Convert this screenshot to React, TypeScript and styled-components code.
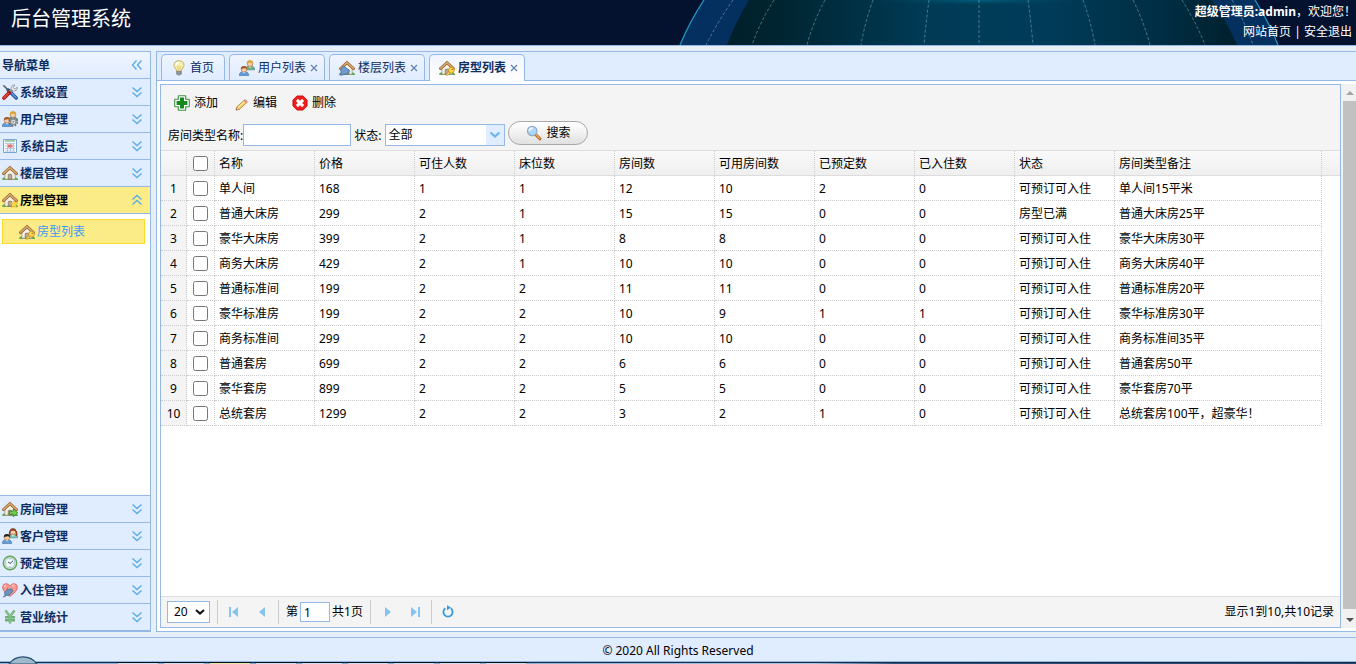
import React from 'react';
import styled, { createGlobalStyle, css } from 'styled-components';

const LINE = '#95b8e7';
const PALE = '#e0ecff';

const GlobalStyle = createGlobalStyle`
  *, *::before, *::after { box-sizing: border-box; }
  html, body, #root { height: 100%; }
  body {
    margin: 0;
    overflow: hidden;
    background: #e6eef8;
    color: #000;
    font: 12px/16px "Noto Sans", "Noto Sans CJK SC", sans-serif;
  }
  button, input, select { font: inherit; color: inherit; }
  button { margin: 0; padding: 0; border: 0; background: none; cursor: pointer; }
  svg { display: block; flex: none; }
`;

/* ---------- page frame ---------- */

const Page = styled.div`
  display: flex;
  flex-direction: column;
  height: 100vh;
`;

const Header = styled.header`
  position: relative;
  display: flex;
  justify-content: space-between;
  height: 46px;
  flex: none;
  overflow: hidden;
  background: #04122f;
  border-bottom: 1px solid ${LINE};
  color: #fff;
`;

const GlobeBackdrop = styled.svg`
  position: absolute;
  inset: 0;
  width: 100%;
  height: 100%;
`;

const Title = styled.h1`
  position: relative;
  margin: 0;
  padding: 4px 0 0 11px;
  font-size: 20px;
  line-height: 30px;
  font-weight: 400;
`;

const Account = styled.div`
  position: relative;
  padding: 2px 4px 0 0;
  text-align: right;
  line-height: 20px;
`;

const Greeting = styled.p`
  margin: 0 -4px 0 0;
`;

const HeaderLink = styled.a`
  color: #fff;
  text-decoration: none;
`;

const Body = styled.div`
  display: flex;
  gap: 5px;
  flex: 1;
  min-height: 0;
  padding: 5px 0;
`;

const Footer = styled.footer`
  height: 25px;
  flex: none;
  background: ${PALE};
  border: solid ${LINE};
  border-width: 1px 0;
  text-align: center;
  line-height: 26px;
`;

const TaskStrip = styled.div`
  position: relative;
  height: 2px;
  flex: none;
  background: linear-gradient(90deg, #8fb9dc, #7ba3c8 20%, #a9c6e2 60%, #31527c 66%, #27456f);
  border-top: 1px solid #142a47;
`;

const StripDrawing = styled.svg`
  position: absolute;
  left: 0;
  bottom: 0;
`;

/* ---------- navigation ---------- */

const Sidebar = styled.nav`
  display: flex;
  flex-direction: column;
  width: 151px;
  flex: none;
  border: solid ${LINE};
  border-width: 1px 1px 1px 0;
  background: #fff;
`;

const SidebarTitle = styled.div`
  display: flex;
  align-items: center;
  height: 27px;
  flex: none;
  padding: 0 5px 0 2px;
  border-bottom: 1px solid ${LINE};
  background: linear-gradient(#eff5ff, ${PALE});
  color: #0e2d5f;
  font-weight: 700;
`;

const NavHeading = styled.button<{ $active?: boolean }>`
  display: flex;
  align-items: center;
  gap: 2px;
  width: 100%;
  height: 27px;
  flex: none;
  padding: 0 5px 0 2px;
  border-bottom: 1px solid ${LINE};
  background: ${p => (p.$active ? '#fbec88' : PALE)};
  color: ${p => (p.$active ? '#000' : '#0e2d5f')};
  font-weight: 700;
  text-align: left;
`;

const NavLabel = styled.span`
  flex: 1;
  padding-top: 2px;
`;

const NavPanel = styled.div`
  flex: 1;
  padding: 5px 5px 0 2px;
  border-bottom: 1px solid ${LINE};
`;

const NavLink = styled.a`
  display: flex;
  align-items: center;
  gap: 2px;
  height: 25px;
  padding-left: 16px;
  border: 1px solid #fbdc2b;
  background: #fbec88;
  color: #3b9cf5;
  text-decoration: none;
`;

/* ---------- tabs ---------- */

const Main = styled.main`
  display: flex;
  flex-direction: column;
  flex: 1;
  min-width: 0;
  border: solid ${LINE};
  border-width: 1px 0 1px 1px;
  background: #fff;
`;

const TabBar = styled.div`
  display: flex;
  gap: 4px;
  height: 29px;
  flex: none;
  padding: 2px 0 0 4px;
  border-bottom: 1px solid ${LINE};
  background: ${PALE};
`;

const Tab = styled.div<{ $active?: boolean }>`
  display: flex;
  align-items: center;
  height: ${p => (p.$active ? 27 : 26)}px;
  padding: ${p => (p.$active ? 0 : 1)}px 6px 0 9px;
  border: 1px solid ${LINE};
  border-bottom: 0;
  border-radius: 5px 5px 0 0;
  color: #0e2d5f;
  background: linear-gradient(#eff5ff, ${PALE});
  ${p => p.$active && css`background: linear-gradient(#eff5ff, #fff); font-weight: 700;`}
`;

const TabButton = styled.button`
  display: flex;
  align-items: center;
  gap: 3px;
  font-weight: inherit;
`;

const HomeTab = styled(Tab)`
  padding: 1px 10px 0 9px;
`;

const TabClose = styled.button`
  margin-left: 4px;
`;

const Workspace = styled.div`
  display: flex;
  flex: 1;
  min-height: 0;
  padding: 3px 0 3px 3px;
`;

const GridPanel = styled.section`
  display: flex;
  flex-direction: column;
  flex: 1;
  min-width: 0;
  border: 1px solid ${LINE};
`;

const ScrollTrack = styled.div`
  display: flex;
  flex-direction: column;
  width: 15px;
  flex: none;
  padding-left: 2px;
  background: #f1f1f1;
`;

const ScrollArrow = styled.button`
  display: flex;
  align-items: center;
  justify-content: center;
  height: 17px;
  flex: none;
`;

const ScrollThumb = styled.div`
  flex: 1;
  margin-bottom: 2px;
  background: #c1c1c1;
`;

/* ---------- toolbar ---------- */

const Toolbar = styled.div`
  flex: none;
  padding: 6px 7px 0;
  background: #f4f4f4;
  border-bottom: 1px solid #ddd;
`;

const ActionRow = styled.div`
  display: flex;
  gap: 15px;
  height: 24px;
  padding-left: 6px;
`;

const Action = styled.button`
  display: flex;
  align-items: center;
  gap: 4px;
`;

const FilterRow = styled.form`
  display: flex;
  align-items: center;
  height: 35px;
  padding-top: 5px;
`;

const FilterLabel = styled.label`
  padding-top: 2px;
`;

const StateLabel = styled(FilterLabel)`
  margin: 0 4px 0 3px;
`;

const TextBox = styled.input`
  width: 108px;
  height: 22px;
  padding: 0 4px;
  border: 1px solid ${LINE};
  background: #fff;
  outline: 0;
`;

const Combo = styled.div`
  display: flex;
  align-items: center;
  width: 120px;
  height: 22px;
  border: 1px solid ${LINE};
  background: linear-gradient(90deg, #fff 100px, ${PALE} 100px);
`;

const ComboSelect = styled.select`
  width: 118px;
  height: 20px;
  margin-right: -15px;
  padding: 0 2px;
  border: 0;
  background: transparent;
  appearance: none;
  outline: 0;
`;

const SearchButton = styled.button`
  display: flex;
  align-items: center;
  justify-content: center;
  gap: 4px;
  width: 80px;
  height: 24px;
  margin: 0 0 4px 3px;
  border: 1px solid #a8a8a8;
  border-radius: 12px;
  background: linear-gradient(#fff, #f4f4f4 40%, #e0e0e0);
`;

/* ---------- data grid ---------- */

const TableArea = styled.div`
  flex: 1;
  min-height: 0;
  background:
    linear-gradient(#ddd, #ddd) 0 24px / 100% 1px no-repeat,
    linear-gradient(#f9f9f9, #efefef) 0 0 / 100% 24px no-repeat;
`;

const Table = styled.table`
  width: calc(100% - 18px);
  table-layout: fixed;
  border-collapse: separate;
  border-spacing: 0;
`;

const cell = css`
  height: 25px;
  padding: 2px 4px 0;
  border: 0 dotted #ccc;
  border-width: 0 1px 1px 0;
  font-weight: 400;
  text-align: left;
  white-space: nowrap;
`;

const HeadCell = styled.th`
  ${cell}
  border-bottom: 1px solid #ddd;
`;

const HeadCheckCell = styled(HeadCell)`
  padding-top: 0;
`;

const Cell = styled.td`
  ${cell}
`;

const CheckCell = styled(Cell)`
  padding-top: 0;
`;

const NumberCell = styled.td`
  ${cell}
  padding: 2px 0 0;
  text-align: center;
  background: #f4f4f4;
`;

const Check = styled.input`
  display: block;
  width: 15px;
  height: 15px;
  margin: 0 2px;
`;

/* ---------- pager ---------- */

const Pager = styled.div`
  display: flex;
  align-items: center;
  height: 31px;
  flex: none;
  padding: 0 6px;
  border-top: 1px solid #ddd;
  background: #f4f4f4;
`;

const PageSize = styled.div`
  display: flex;
  align-items: center;
  width: 43px;
  height: 22px;
  border: 1px solid ${LINE};
  background: #fff;
`;

const PageSizeSelect = styled.select`
  width: 41px;
  height: 20px;
  margin-right: -14px;
  padding: 0 6px;
  border: 0;
  background: transparent;
  appearance: none;
  outline: 0;
`;

const Divider = styled.span`
  width: 1px;
  height: 24px;
  margin: 0 7px;
  background: #ccc;
`;

const PagerButton = styled.button`
  display: flex;
  align-items: center;
  justify-content: center;
  width: 18px;
  height: 24px;
`;

const PagerPair = styled.div`
  display: flex;
  gap: 10px;
`;

const PageBox = styled(TextBox)`
  width: 30px;
  height: 20px;
  margin: 0 2px;
  padding: 0 3px;
`;

const Summary = styled.span`
  margin-left: auto;
`;

/* ---------- icons ---------- */

const Icon = ({ children }: { children: React.ReactNode }) => (
  <svg width="16" height="16" viewBox="0 0 16 16" aria-hidden="true">{children}</svg>
);

const HouseShape = () => (
  <>
    <path d="M0 13.7q2-2.2 5-1.4h7q3-.4 4 1.6v1.2H.5z" fill="#5fae4a" />
    <path d="M2.9 8 8 3.2 13.1 8v6.2H2.9z" fill="#f6f2ea" stroke="#9a8b7a" strokeWidth=".7" />
    <path d="M6.2 14.2V9.7q1.8-1.4 3.6 0v4.5z" fill="#b9a894" stroke="#7a6a5a" strokeWidth=".7" />
    <path d="M1.5 8.6 8 2.7l6.5 5.9" fill="none" stroke="#8f5f2c" strokeWidth="2.9" strokeLinecap="round" />
    <path d="M1.6 8.4 8 2.6l6.4 5.8" fill="none" stroke="#d6a568" strokeWidth="1.7" strokeLinecap="round" />
  </>
);

const HouseIcon = ({ badge }: { badge?: 'star' | 'key' | 'go' | 'link' }) => (
  <Icon>
    <HouseShape />
    {badge === 'star' && <path d="m12 8.4 1.2 2.3 2.6.3-1.9 1.8.5 2.7-2.4-1.3-2.4 1.3.5-2.7L8.2 11l2.6-.3z" fill="#ffd84a" stroke="#e4a91b" strokeWidth=".5" />}
    {badge === 'key' && (
      <>
        <path d="m10.5 11-4 4h2.6l2.6-2.6" fill="#ffe06b" stroke="#b98211" strokeWidth=".7" />
        <circle cx="12.4" cy="10.2" r="2.9" fill="#ffd74f" stroke="#c18c18" strokeWidth=".8" />
        <circle cx="13.2" cy="9.4" r=".7" fill="#9c6c0d" />
      </>
    )}
    {badge === 'go' && <path d="M7.5 10.2h3.8V7.8l4.4 4-4.4 4v-2.5H7.5z" fill="#74cc4e" stroke="#2e7d20" strokeWidth=".8" />}
    {badge === 'link' && <path d="m.8 15 1.4-2.4-.5-3.6 2.8-3 6 4.6-1 2.7-3.5.9-2.8.9z" fill="#6d9bd0" stroke="#44698f" strokeWidth=".8" />}
  </Icon>
);

const ToolsIcon = () => (
  <Icon>
    <path d="m14.2 14-8-8" stroke="#1e4f94" strokeWidth="3.4" strokeLinecap="round" />
    <path d="m14 13.6-4-4" stroke="#5a96dc" strokeWidth="1.6" strokeLinecap="round" />
    <path d="M6.8 6.8 2.3 2.3" stroke="#555" strokeWidth="1.6" />
    <path d="m.8.9 1.6.2 1.7 1.8-1 1-2-1.6z" fill="#777" />
    <path d="M6.6 9.4 11 5" stroke="#8b8f94" strokeWidth="3" />
    <path d="M15.2 3.2 13 5.2l-2-1.8L13 1Q9.8.3 9.4 3.2L9 5l2.1 2.2 2-.4q2.9-.7 2.1-3.6z" fill="#eceef0" stroke="#8b8f94" strokeWidth=".8" />
    <path d="m2 14 5.2-5.2" stroke="#a31212" strokeWidth="3.6" strokeLinecap="round" />
    <path d="m2 13.8 4.5-4.5" stroke="#e5473e" strokeWidth="1.7" strokeLinecap="round" />
  </Icon>
);

const Person = ({ x, y, hair, shirt }: { x: number; y: number; hair: string; shirt: string }) => (
  <g transform={`translate(${x} ${y})`}>
    <path d="M0 9.5Q0 5.6 4.7 5.6t4.7 3.9z" fill={shirt} stroke="#4a719a" strokeWidth=".6" />
    <path d="m3.2 5.9 1.5 1.7 1.5-1.7z" fill="#fff" />
    <circle cx="4.7" cy="3.4" r="2.8" fill="#f4cda5" stroke="#a46a3c" strokeWidth=".6" />
    <path d="M1.6 3.6Q1 .1 4.7 0t3.1 3.7Q6.5 1.9 4.3 2.5 2.6 2.6 1.6 3.6z" fill={hair} />
  </g>
);

const UsersIcon = ({ variant }: { variant?: 'gear' | 'customer' }) => (
  <Icon>
    <Person x={6.3} y={0.3} hair={variant === 'customer' ? '#8b4528' : '#dba434'} shirt={variant === 'customer' ? '#7fd1b4' : '#6fb56a'} />
    <Person x={0.3} y={6} hair={variant === 'customer' ? '#27211e' : '#a95a2b'} shirt="#5d9ce0" />
    {variant === 'customer' && <path d="M8 3Q7 7 8.8 6.8M14 3q1.4 3 0 5" stroke="#8b4528" strokeWidth="1.6" fill="none" />}
    {variant === 'gear' && (
      <>
        <circle cx="11.3" cy="10.8" r="4" fill="none" stroke="#6e7173" strokeWidth="1.8" strokeDasharray="1.8 1.3" />
        <circle cx="11.3" cy="10.8" r="2.8" fill="#e3e5e6" stroke="#898d90" strokeWidth="1.3" />
        <circle cx="11.3" cy="10.8" r="1" fill="#8c8f92" />
      </>
    )}
  </Icon>
);

const LogIcon = () => (
  <Icon>
    <path d="M1.5 1.5h13v13h-13z" fill="#f7faff" stroke="#7da3d0" />
    <path d="M3 3h10" stroke="#6cb370" strokeWidth="1.2" />
    <path d="M3 5.5h10M3 8h10M3 10.5h10M3 13h10M5.5 5v8.5M8.5 5v8.5M11.5 5v8.5" stroke="#a7c3e6" strokeWidth=".9" />
    <path d="M6 6.5h4.5v3H6z" fill="#e87065" />
  </Icon>
);

const ClockIcon = () => (
  <Icon>
    <circle cx="8" cy="8" r="6.7" fill="#e9f3e6" stroke="#5fa557" strokeWidth="1.4" />
    <circle cx="8" cy="8" r="5" fill="#f4f9fc" stroke="#91b6c9" strokeWidth=".8" />
    <path d="M8 8.5 11 5.8M8.3 8.5 6 7" stroke="#34546a" fill="none" />
    <path d="M8 3.6v1M8 11.4v1M3.6 8h1M11.4 8h1" stroke="#7f9cae" strokeWidth=".8" />
  </Icon>
);

const HeartIcon = () => (
  <Icon>
    <path d="M8 14.3Q.4 9 .6 5.2.9 1.7 4 1.7 6.7 1.7 8 4q1.3-2.3 4-2.3 3.1 0 3.4 3.5Q15.6 9 8 14.3z" fill="#f69a94" stroke="#d65555" strokeWidth=".8" />
    <path d="M2.2 5Q2.3 3.2 4 3M10 4q1-1 2.4-.8" stroke="#ffd1cd" strokeWidth="1.2" fill="none" />
    <path d="m1.4 15.2 1.7-2.1-.6-2.6 2.2-2.2 1-2 1.5 1.5 2-1.3 1.7 2.1-1.5 2.5-2.3 2.2-2.7.1z" fill="#6e93ba" stroke="#496b8e" strokeWidth=".8" />
  </Icon>
);

const YenIcon = () => (
  <Icon>
    <path d="m3.5 1.5 4.5 6 4.5-6M3 8.3h10M3 11.3h10M8 7.5v7" stroke="#6fae76" strokeWidth="2.4" fill="none" />
    <path d="m3.5 1.5 4.5 6 4.5-6M8 7.5v7" stroke="#8fc68e" strokeWidth="1.2" fill="none" />
  </Icon>
);

const BulbIcon = () => (
  <Icon>
    <path d="M5.7 11.3Q5.7 9.6 4.2 8 3 6.8 3 5.2 3.2.9 8 .7q4.8.2 5 4.5 0 1.6-1.2 2.8-1.5 1.6-1.5 3.3z" fill="#f8f0ae" stroke="#b9a860" strokeWidth=".9" />
    <path d="M5 5Q5.3 2.7 7.6 2.5" stroke="#fff" strokeWidth="1.5" fill="none" />
    <path d="M7 11V7L6.2 5.8M9 11V7l.8-1.2" stroke="#d9b64c" strokeWidth=".7" fill="none" />
    <path d="M5.7 11.5h4.6v2.7q-2.3 1.9-4.6 0z" fill="#aeb4b8" stroke="#6f767b" strokeWidth=".7" />
    <path d="M5.8 13h4.4" stroke="#666d72" strokeWidth=".8" />
  </Icon>
);

const AddIcon = () => (
  <Icon>
    <path d="M4.7.7h6.6l.4.4v3.2h3.2l.4.4v6.6l-.4.4h-3.2v3.2l-.4.4H4.7l-.4-.4v-3.2H1.1l-.4-.4V4.7l.4-.4h3.2V1.1z" fill="#fff" stroke="#3f8f43" strokeWidth="1.1" />
    <path d="M6 2.6h4V6h3.4v4H10v3.4H6V10H2.6V6H6z" fill="#148a1c" />
  </Icon>
);

const PencilIcon = () => (
  <Icon>
    <g transform="translate(2 2) scale(.86)">
      <path d="m1.3 15 .8-3.5L10.4 4q1.1-1 2.5.3 1.3 1.4.4 2.5L5 14.5z" fill="#f7c75e" stroke="#b87b32" strokeWidth=".9" />
      <path d="m3.8 12.4 7.8-7.6" stroke="#fff0b4" strokeWidth="1.3" />
      <path d="m10.4 4 .9-.8q2.6.3 3 2.8l-1 .9z" fill="#ef9d8e" stroke="#b5706a" strokeWidth=".6" />
      <path d="m1.3 15 .8-3.5 2.9 3z" fill="#f7e4bd" stroke="#b87b32" strokeWidth=".6" />
      <path d="m1 15.3.4-1.6 1.2 1.2z" fill="#333" />
    </g>
  </Icon>
);

const DeleteIcon = () => (
  <Icon>
    <path d="M5 .9h6L15.1 5v6L11 15.1H5L.9 11V5z" fill="#ee1c1c" stroke="#c30d0d" strokeWidth=".8" strokeLinejoin="round" />
    <path d="m4.9 4.9 6.2 6.2M11.1 4.9l-6.2 6.2" stroke="#fff" strokeWidth="3" />
  </Icon>
);

const SearchIcon = () => (
  <Icon>
    <path d="m9.5 9.5 4.4 4.3" stroke="#a65f22" strokeWidth="3" strokeLinecap="round" />
    <path d="m10.3 10 3.5 3.5" stroke="#f4a64c" strokeWidth="1.6" strokeLinecap="round" />
    <circle cx="6.2" cy="6" r="4.7" fill="#aed8f8" stroke="#93a9c4" strokeWidth="1.3" />
    <path d="M3.5 6Q3.6 3.2 6.8 3.2" stroke="#e9f7ff" strokeWidth="1.7" fill="none" />
  </Icon>
);

const DoubleChevron = ({ turn = 0 }: { turn?: number }) => (
  <svg width="16" height="16" viewBox="0 0 16 16" aria-hidden="true">
    <path transform={`rotate(${turn} 8 8)`} d="m3.5 3.5 4.5 4 4.5-4M3.5 8.5l4.5 4 4.5-4" fill="none" stroke="#5cade6" strokeWidth="1.4" />
  </svg>
);

const CloseIcon = () => (
  <svg width="8" height="8" viewBox="0 0 8 8" aria-hidden="true">
    <path d="m1 1 6 6M7 1 1 7" stroke="#6787b5" strokeWidth="1.4" />
  </svg>
);

const pagerPaths = {
  first: 'M3 3h2v10H3zM12 3v10L6 8z',
  prev: 'M11 3v10L5 8z',
  next: 'M6 3v10l6-5z',
  last: 'M11 3h2v10h-2zM4 3v10l6-5z',
};

const PagerGlyph = ({ kind }: { kind: keyof typeof pagerPaths }) => (
  <Icon><path d={pagerPaths[kind]} fill="#86c3ef" /></Icon>
);

const ReloadIcon = () => (
  <Icon>
    <path d="M5.4 4.2a4.6 4.6 0 1 0 5.4.1" fill="none" stroke="#3a9bdc" strokeWidth="1.8" />
    <path d="m7 1.2 4 2.4-4 2.6z" fill="#3a9bdc" />
  </Icon>
);

const meridians = [
  'M733 0Q718 21 706 45',
  'M774 0Q760 22 752 45',
  'M825 0Q813 22 807 45',
  'M873 0Q865 22 861 45',
  'M929 0Q926 22 924 45',
  'M979 0V45',
  'M1028 0Q1031 22 1033 45',
  'M1083 0Q1091 22 1095 45',
  'M1133 0Q1144 22 1150 45',
  'M1182 0Q1196 22 1205 45',
  'M1232 0Q1245 22 1253 45',
];

const Globe = () => (
  <GlobeBackdrop viewBox="0 0 1356 45" preserveAspectRatio="xMidYMid slice" aria-hidden="true">
    <defs>
      <linearGradient id="disk" x1="0" x2="1">
        <stop offset="0" stopColor="#002029" />
        <stop offset=".12" stopColor="#002633" />
        <stop offset=".38" stopColor="#003a55" />
        <stop offset=".62" stopColor="#003c5a" />
        <stop offset=".85" stopColor="#002e44" />
        <stop offset="1" stopColor="#00202c" />
      </linearGradient>
      <radialGradient id="glow" cx=".5" cy=".5" r=".5">
        <stop offset="0" stopColor="#046184" stopOpacity=".9" />
        <stop offset="1" stopColor="#004254" stopOpacity="0" />
      </radialGradient>
    </defs>
    <path d="M680 45Q690 21 704 0H1255Q1269 22 1278 45z" fill="#04305f" />
    <path d="M727 45Q736 21 749 0H1212Q1227 22 1237 45z" fill="url(#disk)" />
    <ellipse cx="979" cy="0" rx="110" ry="6" fill="url(#glow)" />
    <path d="M680 45Q690 21 704 0M1255 0Q1269 22 1278 45" fill="none" stroke="#2494c4" strokeWidth="1.3" />
    {meridians.map(d => (
      <path key={d} d={d} fill="none" stroke="#62a5b5" strokeOpacity=".65" strokeDasharray="3 2" />
    ))}
  </GlobeBackdrop>
);

/* ---------- data ---------- */

const upperNav = [
  { label: '系统设置', icon: <ToolsIcon /> },
  { label: '用户管理', icon: <UsersIcon variant="gear" /> },
  { label: '系统日志', icon: <LogIcon /> },
  { label: '楼层管理', icon: <HouseIcon /> },
];

const lowerNav = [
  { label: '房间管理', icon: <HouseIcon badge="go" /> },
  { label: '客户管理', icon: <UsersIcon variant="customer" /> },
  { label: '预定管理', icon: <ClockIcon /> },
  { label: '入住管理', icon: <HeartIcon /> },
  { label: '营业统计', icon: <YenIcon /> },
];

const tabs = [
  { label: '用户列表', icon: <UsersIcon /> },
  { label: '楼层列表', icon: <HouseIcon badge="link" /> },
  { label: '房型列表', icon: <HouseIcon badge="key" />, active: true },
];

const columns = ['名称', '价格', '可住人数', '床位数', '房间数', '可用房间数', '已预定数', '已入住数', '状态', '房间类型备注'];

const OPEN = '可预订可入住';

const rows: (string | number)[][] = [
  ['单人间', 168, 1, 1, 12, 10, 2, 0, OPEN, '单人间15平米'],
  ['普通大床房', 299, 2, 1, 15, 15, 0, 0, '房型已满', '普通大床房25平'],
  ['豪华大床房', 399, 2, 1, 8, 8, 0, 0, OPEN, '豪华大床房30平'],
  ['商务大床房', 429, 2, 1, 10, 10, 0, 0, OPEN, '商务大床房40平'],
  ['普通标准间', 199, 2, 2, 11, 11, 0, 0, OPEN, '普通标准房20平'],
  ['豪华标准房', 199, 2, 2, 10, 9, 1, 1, OPEN, '豪华标准房30平'],
  ['商务标准间', 299, 2, 2, 10, 10, 0, 0, OPEN, '商务标准间35平'],
  ['普通套房', 699, 2, 2, 6, 6, 0, 0, OPEN, '普通套房50平'],
  ['豪华套房', 899, 2, 2, 5, 5, 0, 0, OPEN, '豪华套房70平'],
  ['总统套房', 1299, 2, 2, 3, 2, 1, 0, OPEN, '总统套房100平，超豪华！'],
];

const stripSlots = [117, 163, 209, 255, 301, 347, 393, 439, 485];

/* ---------- page ---------- */

const NavItem = ({ label, icon }: { label: string; icon: React.ReactNode }) => (
  <NavHeading type="button">
    {icon}
    <NavLabel>{label}</NavLabel>
    <DoubleChevron />
  </NavHeading>
);

export default function App() {
  return (
    <Page>
      <GlobalStyle />
      <Header>
        <Globe />
        <Title>后台管理系统</Title>
        <Account>
          <Greeting><b>超级管理员:admin</b>，欢迎您！</Greeting>
          <HeaderLink href="#site">网站首页</HeaderLink> | <HeaderLink href="#logout">安全退出</HeaderLink>
        </Account>
      </Header>

      <Body>
        <Sidebar>
          <SidebarTitle><NavLabel>导航菜单</NavLabel><DoubleChevron turn={90} /></SidebarTitle>
          {upperNav.map(item => <NavItem key={item.label} {...item} />)}
          <NavHeading type="button" $active aria-expanded="true">
            <HouseIcon badge="star" />
            <NavLabel>房型管理</NavLabel>
            <DoubleChevron turn={180} />
          </NavHeading>
          <NavPanel>
            <NavLink href="#room-types"><HouseIcon badge="key" />房型列表</NavLink>
          </NavPanel>
          {lowerNav.map(item => <NavItem key={item.label} {...item} />)}
        </Sidebar>

        <Main>
          <TabBar>
            <HomeTab><TabButton type="button"><BulbIcon />首页</TabButton></HomeTab>
            {tabs.map(tab => (
              <Tab key={tab.label} $active={tab.active}>
                <TabButton type="button">{tab.icon}{tab.label}</TabButton>
                <TabClose type="button" aria-label="关闭"><CloseIcon /></TabClose>
              </Tab>
            ))}
          </TabBar>

          <Workspace>
            <GridPanel>
              <Toolbar>
                <ActionRow>
                  <Action type="button"><AddIcon />添加</Action>
                  <Action type="button"><PencilIcon />编辑</Action>
                  <Action type="button"><DeleteIcon />删除</Action>
                </ActionRow>
                <FilterRow onSubmit={e => e.preventDefault()}>
                  <FilterLabel htmlFor="type-name">房间类型名称:</FilterLabel>
                  <TextBox id="type-name" />
                  <StateLabel htmlFor="state">状态:</StateLabel>
                  <Combo>
                    <ComboSelect id="state"><option>全部</option></ComboSelect>
                    <svg width="12" height="8" viewBox="0 0 12 8" aria-hidden="true">
                      <path d="m1.5 1.5 4.5 4 4.5-4" fill="none" stroke="#6bb5ee" strokeWidth="2.2" />
                    </svg>
                  </Combo>
                  <SearchButton type="submit"><SearchIcon />搜索</SearchButton>
                </FilterRow>
              </Toolbar>

              <TableArea>
                <Table>
                  <colgroup>
                    <col style={{ width: 26 }} />
                    <col style={{ width: 28 }} />
                    {columns.slice(0, -1).map(name => <col key={name} style={{ width: 100 }} />)}
                    <col />
                  </colgroup>
                  <thead>
                    <tr>
                      <HeadCell />
                      <HeadCheckCell><Check type="checkbox" aria-label="全选" /></HeadCheckCell>
                      {columns.map(name => <HeadCell key={name}>{name}</HeadCell>)}
                    </tr>
                  </thead>
                  <tbody>
                    {rows.map((row, i) => (
                      <tr key={i}>
                        <NumberCell>{i + 1}</NumberCell>
                        <CheckCell><Check type="checkbox" aria-label={String(row[0])} /></CheckCell>
                        {row.map((value, j) => <Cell key={j}>{value}</Cell>)}
                      </tr>
                    ))}
                  </tbody>
                </Table>
              </TableArea>

              <Pager>
                <PageSize>
                  <PageSizeSelect aria-label="每页记录数"><option>20</option></PageSizeSelect>
                  <svg width="10" height="6" viewBox="0 0 10 6" aria-hidden="true">
                    <path d="m1 1 4 3.6L9 1" fill="none" stroke="#111" strokeWidth="2" />
                  </svg>
                </PageSize>
                <Divider />
                <PagerPair>
                  <PagerButton type="button" aria-label="首页"><PagerGlyph kind="first" /></PagerButton>
                  <PagerButton type="button" aria-label="上一页"><PagerGlyph kind="prev" /></PagerButton>
                </PagerPair>
                <Divider />
                <label htmlFor="page">第</label>
                <PageBox id="page" defaultValue="1" />
                <span>共1页</span>
                <Divider />
                <PagerPair>
                  <PagerButton type="button" aria-label="下一页"><PagerGlyph kind="next" /></PagerButton>
                  <PagerButton type="button" aria-label="末页"><PagerGlyph kind="last" /></PagerButton>
                </PagerPair>
                <Divider />
                <PagerButton type="button" aria-label="刷新"><ReloadIcon /></PagerButton>
                <Summary>显示1到10,共10记录</Summary>
              </Pager>
            </GridPanel>

            <ScrollTrack>
              <ScrollArrow type="button" aria-label="向上滚动">
                <svg width="8" height="4" viewBox="0 0 8 4" aria-hidden="true"><path d="m0 4 4-4 4 4z" fill="#a3a3a3" /></svg>
              </ScrollArrow>
              <ScrollThumb />
              <ScrollArrow type="button" aria-label="向下滚动">
                <svg width="8" height="4" viewBox="0 0 8 4" aria-hidden="true"><path d="m0 0 4 4 4-4z" fill="#505050" /></svg>
              </ScrollArrow>
            </ScrollTrack>
          </Workspace>
        </Main>
      </Body>

      <Footer>© 2020 All Rights Reserved</Footer>
      <TaskStrip>
        <StripDrawing width="540" height="8" viewBox="0 0 540 8" aria-hidden="true">
          <path d="M9 8Q14 .8 23 .8T37 8z" fill="#9fb9cc" stroke="#2a5275" strokeWidth="1.2" />
          {stripSlots.map(x => (
            <g key={x}>
              <path d={`M${x} 6.5h42`} stroke="#05101c" />
              <path d={`M${x + 1} 7.5h40`} stroke={x === 209 ? '#e8e6a0' : '#cfe0e8'} />
            </g>
          ))}
        </StripDrawing>
      </TaskStrip>
    </Page>
  );
}
